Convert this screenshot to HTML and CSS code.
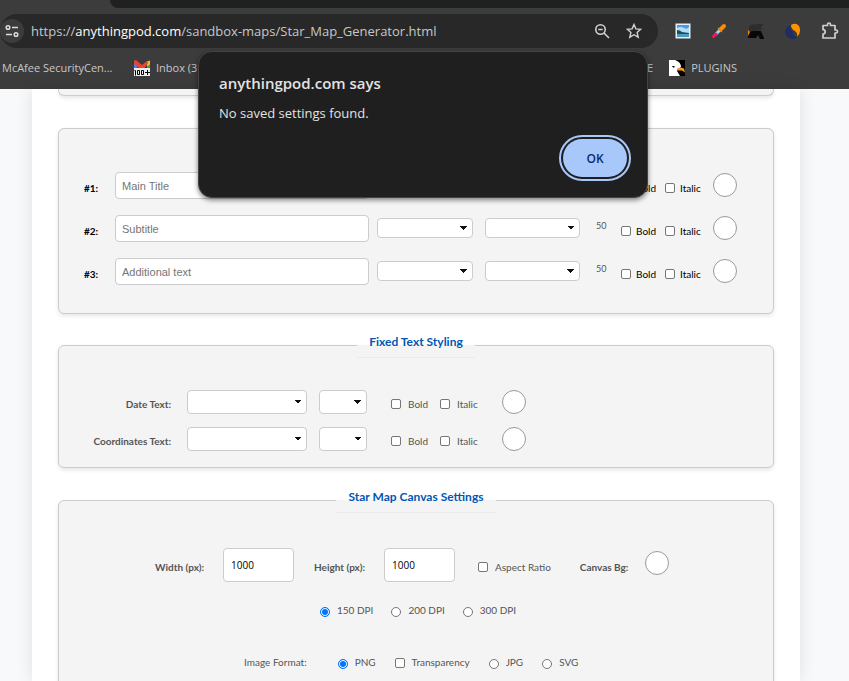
FILE: index.html
```html
<!DOCTYPE html>
<html lang="en">
<head>
<meta charset="utf-8">
<title>Star Map Generator</title>
<link rel="stylesheet" href="styles.css">
</head>
<body>
<header class="browser">
  <div class="tabstrip"></div>
  <div class="toolbar">
    <div class="address">
      <span class="site-info"><svg width="16" height="16" viewBox="0 0 16 16" fill="none" stroke="#dcdcdc" stroke-width="1.5"><circle cx="4" cy="4.500" r="1.800"/><path d="M8 4.500h6M2 11.500h6"/><circle cx="12" cy="11.500" r="1.800"/></svg></span>
      <span class="url">https://<b>anythingpod.com</b>/sandbox-maps/Star_Map_Generator.html</span>
      <svg width="16" height="16" viewBox="0 0 16 16" fill="none" stroke="#d0d0d0" stroke-width="1.600"><circle cx="6.500" cy="6.500" r="4.700"/><path d="M10 10l5 5M4.300 6.500h4.400"/></svg>
      <svg class="star" width="16" height="16" viewBox="0 0 16 16" fill="none" stroke="#d0d0d0" stroke-width="1.400"><path d="M8 1.500l1.900 4.400 4.800.4-3.600 3.200 1.100 4.700L8 11.700l-4.200 2.500 1.100-4.700L1.300 6.300l4.800-.4z"/></svg>
    </div>
    <div class="extensions">
      <svg width="16" height="16" viewBox="0 0 16 16"><path fill="#e8eef5" d="M0.500 0.500h15v15h-15z"/><path fill="#4a9be0" d="M2 2h12v5H2z"/><path fill="#b9dcf5" d="M2 5q4-2 7 0t5-1v6H2z"/><path fill="#175166" d="M2 7q3 0 5 2l7 1v1H2z"/><path fill="#4f9ac0" d="M2 11h12v3H2z"/></svg>
      <svg width="16" height="16" viewBox="0 0 16 16"><path d="M9.500 6.500l3.500-3.500" stroke="#ff8a00" stroke-width="4" stroke-linecap="round"/><path d="M4.500 11.500l5-5" stroke="#9bd5ff" stroke-width="3"/><path d="M2.500 13.500l2.500-2.500" stroke="#f5155c" stroke-width="3" stroke-linecap="round"/><path d="M7 5l4 4" stroke="#e07a10" stroke-width="1.500"/></svg>
      <svg width="18" height="16" viewBox="0 0 18 16"><path d="M2 3q4-3 6-1 4-2 6-1l3 0-3 3 1 3-9 1-4-1z" fill="#2d2d2d"/><path d="M1 9l5-1h8l3 7v1h-4l-2-4-2 3H1z" fill="#080808"/><path d="M1 7l2 2-2 4z" fill="#f58200"/></svg>
      <svg width="16" height="16" viewBox="0 0 16 16"><path d="M6 2A7 7 0 1 0 12 14Q8 13 8 9 4 6 6 2z" fill="#202c62"/><path d="M6 2q5-3 8 1 3 6-2 11 1-4-2-6-4-2-4-6z" fill="#ff9300"/></svg>
      <svg width="18" height="18" viewBox="0 0 18 18" fill="none" stroke="#d0d0d0" stroke-width="1.700" stroke-linejoin="round"><path d="M2 3.500h4.500v-1a1.500 1.500 0 0 1 3 0v1H14V8h1a1.500 1.500 0 0 1 0 3h-1v5H2v-4a2.200 2.200 0 0 0 0-4.400z"/></svg>
    </div>
  </div>
  <nav class="bookmarks">
    <a href="#" class="mcafee">McAfee SecurityCen...</a>
    <a href="#" class="inbox"><svg width="16" height="16" viewBox="0 0 16 16"><path fill="#4285f4" d="M0 2h3v7H0z"/><path fill="#34a853" d="M13 3h3v6h-3z"/><path fill="#fbbc04" d="M13 1.500l3-1v4l-3 2z"/><path fill="#ea4335" d="M0 1q2-2 3 0l5 4 5-4 1 2-4 6H6L0 4z"/><path fill="#eee" d="M0 8h16v8H0z"/><path d="M0.500 10.500h1v5M3.500 10.500h2v4h-2zM7.500 10.500h2v4h-2zM11 12.500h5M13.500 10v5" fill="none" stroke="#000"/></svg>Inbox (3</a>
    <span class="folder">E</span>
    <a href="#" class="plugins"><svg width="16" height="16" viewBox="0 0 16 16"><path fill="#000" d="M0 0h16v16H0z"/><path fill="#fff" d="M0 0h6q6 2 6 7l-3 2-1 2 3 5H0z"/><path fill="#f39a22" d="M8 8.500l4-1 3 1 1 4-3-2-4 0z"/><path d="M3 6h2.500v1.500H4z"/></svg>PLUGINS</a>
  </nav>
</header>

<main class="page">
  <div class="card-end"></div>
  <form>
    <fieldset class="card titles">
      <div class="title-row">
        <label class="num" for="t1">#1:</label><input id="t1" class="text" type="text" placeholder="Main Title">
        <select class="s-font" aria-label="Font 1"></select><select class="s-size" aria-label="Size 1"></select><span class="count">50</span>
        <label class="check"><input type="checkbox">Bold</label><label class="check"><input type="checkbox">Italic</label><button type="button" class="swatch" aria-label="Color 1"></button>
      </div>
      <div class="title-row">
        <label class="num" for="t2">#2:</label><input id="t2" class="text" type="text" placeholder="Subtitle">
        <select class="s-font" aria-label="Font 2"></select><select class="s-size" aria-label="Size 2"></select><span class="count">50</span>
        <label class="check"><input type="checkbox">Bold</label><label class="check"><input type="checkbox">Italic</label><button type="button" class="swatch" aria-label="Color 2"></button>
      </div>
      <div class="title-row">
        <label class="num" for="t3">#3:</label><input id="t3" class="text" type="text" placeholder="Additional text">
        <select class="s-font" aria-label="Font 3"></select><select class="s-size" aria-label="Size 3"></select><span class="count">50</span>
        <label class="check"><input type="checkbox">Bold</label><label class="check"><input type="checkbox">Italic</label><button type="button" class="swatch" aria-label="Color 3"></button>
      </div>
    </fieldset>

    <fieldset class="card fixed">
      <legend>Fixed Text Styling</legend>
      <div class="fixed-row">
        <label class="name" for="df">Date Text:</label><select id="df" class="f-font"></select><select class="f-size" aria-label="Date size"></select>
        <label class="check"><input type="checkbox">Bold</label><label class="check"><input type="checkbox">Italic</label><button type="button" class="swatch" aria-label="Date color"></button>
      </div>
      <div class="fixed-row">
        <label class="name" for="cf">Coordinates Text:</label><select id="cf" class="f-font"></select><select class="f-size" aria-label="Coordinates size"></select>
        <label class="check"><input type="checkbox">Bold</label><label class="check"><input type="checkbox">Italic</label><button type="button" class="swatch" aria-label="Coordinates color"></button>
      </div>
    </fieldset>

    <fieldset class="card canvas">
      <legend>Star Map Canvas Settings</legend>
      <div class="size-row">
        <label class="name" for="w">Width (px):</label><input id="w" class="dim" type="text" value="1000">
        <label class="name height" for="h">Height (px):</label><input id="h" class="dim" type="text" value="1000">
        <label class="check aspect"><input type="checkbox">Aspect Ratio</label>
        <label class="name bg" for="bg">Canvas Bg:</label><button type="button" id="bg" class="swatch"></button>
      </div>
      <div class="dpi-row">
        <label class="radio"><input type="radio" name="dpi" checked>150 DPI</label>
        <label class="radio"><input type="radio" name="dpi">200 DPI</label>
        <label class="radio"><input type="radio" name="dpi">300 DPI</label>
      </div>
      <div class="format-row">
        <span class="format">Image Format:</span>
        <label class="radio"><input type="radio" name="fmt" checked>PNG</label>
        <label class="radio"><input type="checkbox">Transparency</label>
        <label class="radio"><input type="radio" name="fmt">JPG</label>
        <label class="radio"><input type="radio" name="fmt">SVG</label>
      </div>
    </fieldset>
  </form>
</main>

<dialog open class="alert">
  <h1>anythingpod.com says</h1>
  <p>No saved settings found.</p>
  <button type="button" class="ok">OK</button>
</dialog>
</body>
</html>
```
FILE: styles.css
```css
* { box-sizing: border-box; }
html, body { height: 100%; }
body {
  margin: 0;
  overflow: hidden;
  display: flex;
  flex-direction: column;
  background: #f8f9fb;
  font: 10px/14px Lato, sans-serif;
  color: #555;
}
svg { display: block; flex: none; }

/* Browser chrome */
.browser {
  flex: none;
  background: #3c3c3c;
  color: #c7c7c7;
  font-family: "Open Sans", sans-serif;
}
.tabstrip {
  height: 8px;
  margin-left: 110px;
  background: #1f2020;
  border-bottom-left-radius: 8px;
}
.toolbar {
  display: flex;
  align-items: center;
  padding-top: 6px;
}
.address {
  flex: 1;
  display: flex;
  align-items: center;
  height: 34px;
  padding-right: 16px;
  background: #282828;
  border-radius: 17px;
}
.site-info {
  display: grid;
  place-items: center;
  width: 24px;
  height: 24px;
  margin-right: 7px;
  border-radius: 50%;
  background: #3c3c3c;
}
.url { flex: 1; font-size: 13px; line-height: 20px; white-space: nowrap; }
.url b { font-weight: 400; color: #fff; }
.star { margin-left: 16px; }
.extensions {
  display: flex;
  align-items: center;
  gap: 20px;
  padding: 0 10px 0 17px;
}
.bookmarks {
  display: flex;
  align-items: center;
  height: 41px;
  padding: 0 112px 2px 2px;
  font-size: 11px;
  line-height: 16px;
}
.bookmarks a {
  display: flex;
  align-items: center;
  color: inherit;
  text-decoration: none;
}
.mcafee { width: 115px; }
.inbox, .plugins { gap: 6px; }
.inbox { margin-left: 17px; }
.folder { margin-left: auto; }
.plugins { margin-left: 16px; }

/* Page */
.page {
  flex: 1;
  min-height: 0;
  overflow: hidden;
  margin: 0 49px 0 32px;
  padding: 0 26px;
  background: #fff;
  box-shadow: 0 0 16px rgba(0, 0, 0, .1);
}
.card-end {
  height: 7px;
  border: 1px solid #ccc;
  border-top: 0;
  border-radius: 0 0 6px 6px;
  background: #f4f4f4;
  box-shadow: 0 2px 4px rgba(0, 0, 0, .1);
}
.card {
  min-width: 0;
  margin: 0;
  padding: 0;
  border: 1px solid #ccc;
  border-radius: 6px;
  background: #f4f4f4;
  box-shadow: 0 2px 4px rgba(0, 0, 0, .1);
}
legend {
  height: 26px;
  margin: 0 auto;
  padding: 0 12px;
  border-bottom: 1px solid #ebebeb;
  color: #0056b3;
  font-size: 12px;
  line-height: 19px;
  font-weight: 700;
}
.titles { margin-top: 32px; padding: 43px 36px 28px 25px; }
.title-row, .fixed-row, .size-row { display: flex; align-items: center; }
.title-row { height: 27px; color: #000; }
.title-row + .title-row { margin-top: 16px; }
.title-row select, .title-row .swatch { margin-bottom: 2px; }
.num { width: 31px; padding-top: 4px; font-weight: 700; }
.text, .dim {
  border: 1px solid #ccc;
  border-radius: 4px;
  background: #fff;
  color: #000;
}
.text {
  flex: 1;
  min-width: 0;
  height: 27px;
  padding: 0 6px;
  font: 11px "Liberation Sans", sans-serif;
}
.text::placeholder { color: #757575; }
select {
  appearance: none;
  height: 20px;
  border: 1px solid #ccc;
  border-radius: 4px;
  background-color: #fff;
  background-image:
    linear-gradient(to bottom left, #111 50%, transparent 50%),
    linear-gradient(to bottom right, #111 50%, transparent 50%);
  background-size: 4px 4px;
  background-position: right 8px center, right 4px center;
  background-repeat: no-repeat;
}
.s-font { width: 96px; margin-left: 8px; }
.s-size { width: 95px; margin-left: 12px; margin-right: 16px; }
.count { width: 25px; padding-bottom: 5px; font-size: 9px; }
.count { color: #555; }
.check { display: flex; align-items: center; padding-top: 4px; }
.check input, .radio input {
  appearance: none;
  width: 10px;
  height: 10px;
  margin: 0 5px 0 0;
  border: 1px solid #767676;
  border-radius: 2px;
  background: #fff;
}
.title-row .check { width: 44px; }
.title-row .check + .check { width: 48px; }
.swatch {
  width: 24px;
  height: 24px;
  padding: 0;
  border: 1px solid #999;
  border-radius: 50%;
  background: #fff;
}

.fixed { margin-top: 18px; padding: 31px 0 16px; }
.fixed-row { height: 25px; }
.fixed-row + .fixed-row { margin-top: 12px; }
.name { padding-top: 4px; font-weight: 700; white-space: nowrap; }
.fixed-row .name { width: 112px; text-align: right; }
.fixed-row select { height: 24px; }
.f-font { width: 120px; margin-left: 16px; }
.f-size { width: 48px; margin: 0 24px 0 12px; }
.fixed-row .check input { margin-right: 7px; }
.fixed-row .check { width: 49px; }
.fixed-row .check + .check { width: 62px; }

.canvas { margin-top: 19px; padding: 35px 0 60px; }
.size-row { padding-left: 96px; }
.size-row .name { width: 53px; }
.size-row .height { width: 55px; margin-left: 20px; }
.dim {
  width: 71px;
  height: 34px;
  margin-left: 15px;
  padding: 0 7px;
  font: 10px "Open Sans", sans-serif;
}
.aspect { margin-left: 23px; }
.aspect input { margin-right: 7px; }
.bg { margin-left: 29px; }
.size-row .swatch { margin: 0 0 4px 12px; }
.dpi-row, .format-row { display: flex; align-items: center; height: 14px; }
.dpi-row { gap: 18px; margin-top: 21px; padding-left: 261px; }
.format-row { gap: 19px; margin-top: 38px; padding-left: 185px; }
.format { margin-right: 12px; }
.radio { display: flex; align-items: center; }
.radio input { margin: 4px 7px 0 0; }
.radio input[type="checkbox"] { margin-top: 2px; }
.radio input[type="radio"] { border-radius: 50%; }
.radio input[type="radio"]:checked {
  border-color: #0075ff;
  background: #0075ff;
  box-shadow: inset 0 0 0 1px #fff;
}

/* Dialog */
.alert {
  position: absolute;
  top: 51px;
  left: 0;
  right: 3px;
  width: 450px;
  height: 147px;
  margin: 0 auto;
  padding: 21px 20px 0;
  border: 1px solid #444;
  border-radius: 14px;
  background: #1f1f1f;
  color: #e3e3e3;
  font-family: "Open Sans", sans-serif;
  box-shadow: 0 2px 5px rgba(0, 0, 0, .5);
}
.alert h1 { margin: 0; font-size: 15px; line-height: 20px; font-weight: 600; }
.alert p { margin: 10px 0 0; font-size: 13px; line-height: 20px; }
.ok {
  display: block;
  width: 64px;
  height: 38px;
  margin: 16px 0 0 auto;
  border: 0;
  border-radius: 19px;
  background: #a8c7fa;
  color: #062e6f;
  font: 600 12px "Open Sans", sans-serif;
  outline: 2px solid #a8c7fa;
  outline-offset: 2px;
}
```
